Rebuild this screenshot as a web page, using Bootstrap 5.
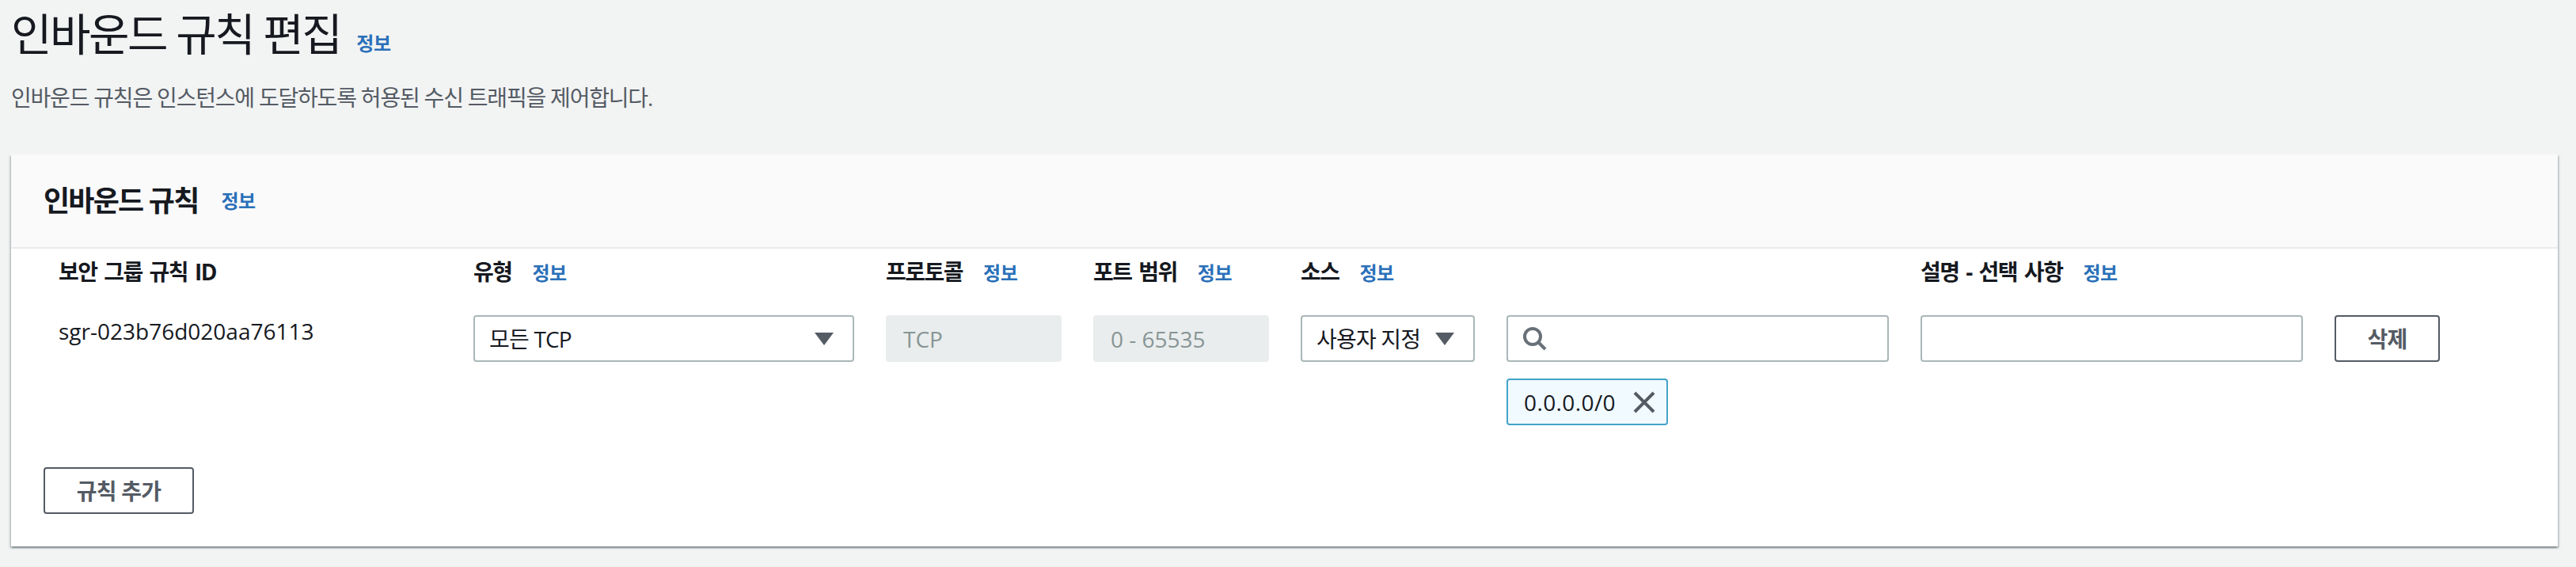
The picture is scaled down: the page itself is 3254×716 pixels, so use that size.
<!DOCTYPE html>
<html lang="ko">
<head>
  <meta charset="UTF-8">
  <title>인바운드 규칙 편집</title>
  <link href="https://cdn.jsdelivr.net/npm/bootstrap@5.3.3/dist/css/bootstrap.min.css" rel="stylesheet">
  <style>
    body {
      font-family: "Open Sans", "Noto Sans CJK KR", sans-serif;
      font-size: 28px;
      line-height: 40px;
      background-color: #f2f3f3;
      color: #16191f;
      min-height: 716px;
    }
    .page-wrap { padding: 0 23px 0 14px; }
    .page-title { font-size: 56px; line-height: 68px; font-weight: 400; margin: 8px 0 0; letter-spacing: -2.5px; }
    .info-link { font-size: 24px; font-weight: 700; letter-spacing: -.5px; color: #2a70b9; text-decoration: none; }
    .page-title .info-link { margin-left: 8px; }
    .page-desc { color: #545b64; margin: 14px 0 0; letter-spacing: -1.2px; }
    .rules-card {
      margin-top: 52px;
      border: 0;
      border-radius: 0;
      height: 495px;
      box-shadow: 0 2px 2px 0 rgba(0,28,36,.3), 2px 2px 2px 0 rgba(0,28,36,.15), -2px 2px 2px 0 rgba(0,28,36,.15);
    }
    .rules-head {
      background: #fafafa;
      border-bottom: 2px solid #eaeded;
      border-radius: 0 !important;
      padding: 0 41px;
      height: 119px;
    }
    .rules-head h2 { font-size: 36px; line-height: 44px; font-weight: 700; margin: 0; letter-spacing: -1.8px; }
    .rules-head .info-link { margin-left: 29px; }
    .rules-body { padding: 0 41px; }
    .rule-grid {
      display: grid;
      grid-template-columns: 503px 481px 222px 222px 220px 483px 483px 133px;
      column-gap: 40px;
      align-items: start;
    }
    .col-title { font-weight: 700; height: 84px; padding-top: 9px; line-height: 40px; letter-spacing: -1.5px; word-spacing: 3px; }
    .col-title .info-link { margin-left: 26px; }
    .id-title { padding-left: 19px; }
    .rule-id { padding-left: 19px; line-height: 40px; }
    .aws-field {
      height: 59px;
      font-size: 28px;
      line-height: 40px;
      color: #16191f;
      border: 2px solid #aab7b8;
      border-radius: 4px;
      padding: 0 20px;
      box-shadow: none;
    }
    .aws-select {
      padding-left: 18px;
      background-image: url("data:image/svg+xml,%3Csvg xmlns='http://www.w3.org/2000/svg' viewBox='0 0 24 16'%3E%3Cpath fill='%23545b64' d='M0 0h24L12 16z'/%3E%3C/svg%3E");
      background-size: 24px 16px;
      background-position: right 24px center;
      letter-spacing: -.8px;
    }
    .aws-field:disabled { background: #eaeded; border-color: #eaeded; color: #879596; opacity: 1; }
    .search-box { position: relative; }
    .search-box svg { position: absolute; left: 20px; top: 14px; }
    .search-box .aws-field { padding-left: 62px; }
    .ip-token {
      width: 204px;
      height: 59px;
      margin-top: 21px;
      padding: 0 14px 0 20px;
      background: #f1faff;
      border: 2px solid #44a3c9;
      border-radius: 4px;
      letter-spacing: .4px;
    }
    .aws-btn {
      height: 59px;
      font-size: 28px;
      line-height: 40px;
      font-weight: 700;
      color: #545b64;
      background: #fff;
      border: 2px solid #545b64;
      border-radius: 4px;
      padding: 0;
      letter-spacing: -.8px;
    }
    .add-btn { width: 190px; margin-top: 53px; display: block; }
    .del-btn { width: 133px; }
  </style>
</head>
<body>
  <div class="page-wrap">
    <h1 class="page-title">인바운드 규칙 편집 <a class="info-link" href="#">정보</a></h1>
    <p class="page-desc">인바운드 규칙은 인스턴스에 도달하도록 허용된 수신 트래픽을 제어합니다.</p>

    <div class="card rules-card">
      <div class="card-header rules-head d-flex align-items-center">
        <h2>인바운드 규칙</h2>
        <a class="info-link" href="#">정보</a>
      </div>
      <div class="rules-body">
        <div class="rule-grid">
          <div class="col-title id-title">보안 그룹 규칙 ID</div>
          <div class="col-title">유형<a class="info-link" href="#">정보</a></div>
          <div class="col-title">프로토콜<a class="info-link" href="#">정보</a></div>
          <div class="col-title">포트 범위<a class="info-link" href="#">정보</a></div>
          <div class="col-title">소스<a class="info-link" href="#">정보</a></div>
          <div></div>
          <div class="col-title">설명 - 선택 사항<a class="info-link" href="#">정보</a></div>
          <div></div>

          <div class="rule-id">sgr-023b76d020aa76113</div>
          <select class="form-select aws-field aws-select"><option>모든 TCP</option></select>
          <input class="form-control aws-field" value="TCP" disabled>
          <input class="form-control aws-field" value="0 - 65535" disabled>
          <select class="form-select aws-field aws-select"><option>사용자 지정</option></select>
          <div>
            <div class="search-box">
              <svg width="32" height="32" viewBox="0 0 32 32" fill="none" stroke="#687078" stroke-width="4"><circle cx="13" cy="13" r="10"/><path d="M20 20l9 9"/></svg>
              <input class="form-control aws-field">
            </div>
            <div class="ip-token d-flex align-items-center justify-content-between">
              <span>0.0.0.0/0</span>
              <svg width="28" height="28" viewBox="0 0 28 28" fill="none" stroke="#545b64" stroke-width="4"><path d="M2 2l24 24M26 2L2 26"/></svg>
            </div>
          </div>
          <input class="form-control aws-field">
          <button class="btn aws-btn del-btn" type="button">삭제</button>
        </div>
        <button class="btn aws-btn add-btn" type="button">규칙 추가</button>
      </div>
    </div>
  </div>
  <script src="https://cdn.jsdelivr.net/npm/bootstrap@5.3.3/dist/js/bootstrap.bundle.min.js"></script>
</body>
</html>
